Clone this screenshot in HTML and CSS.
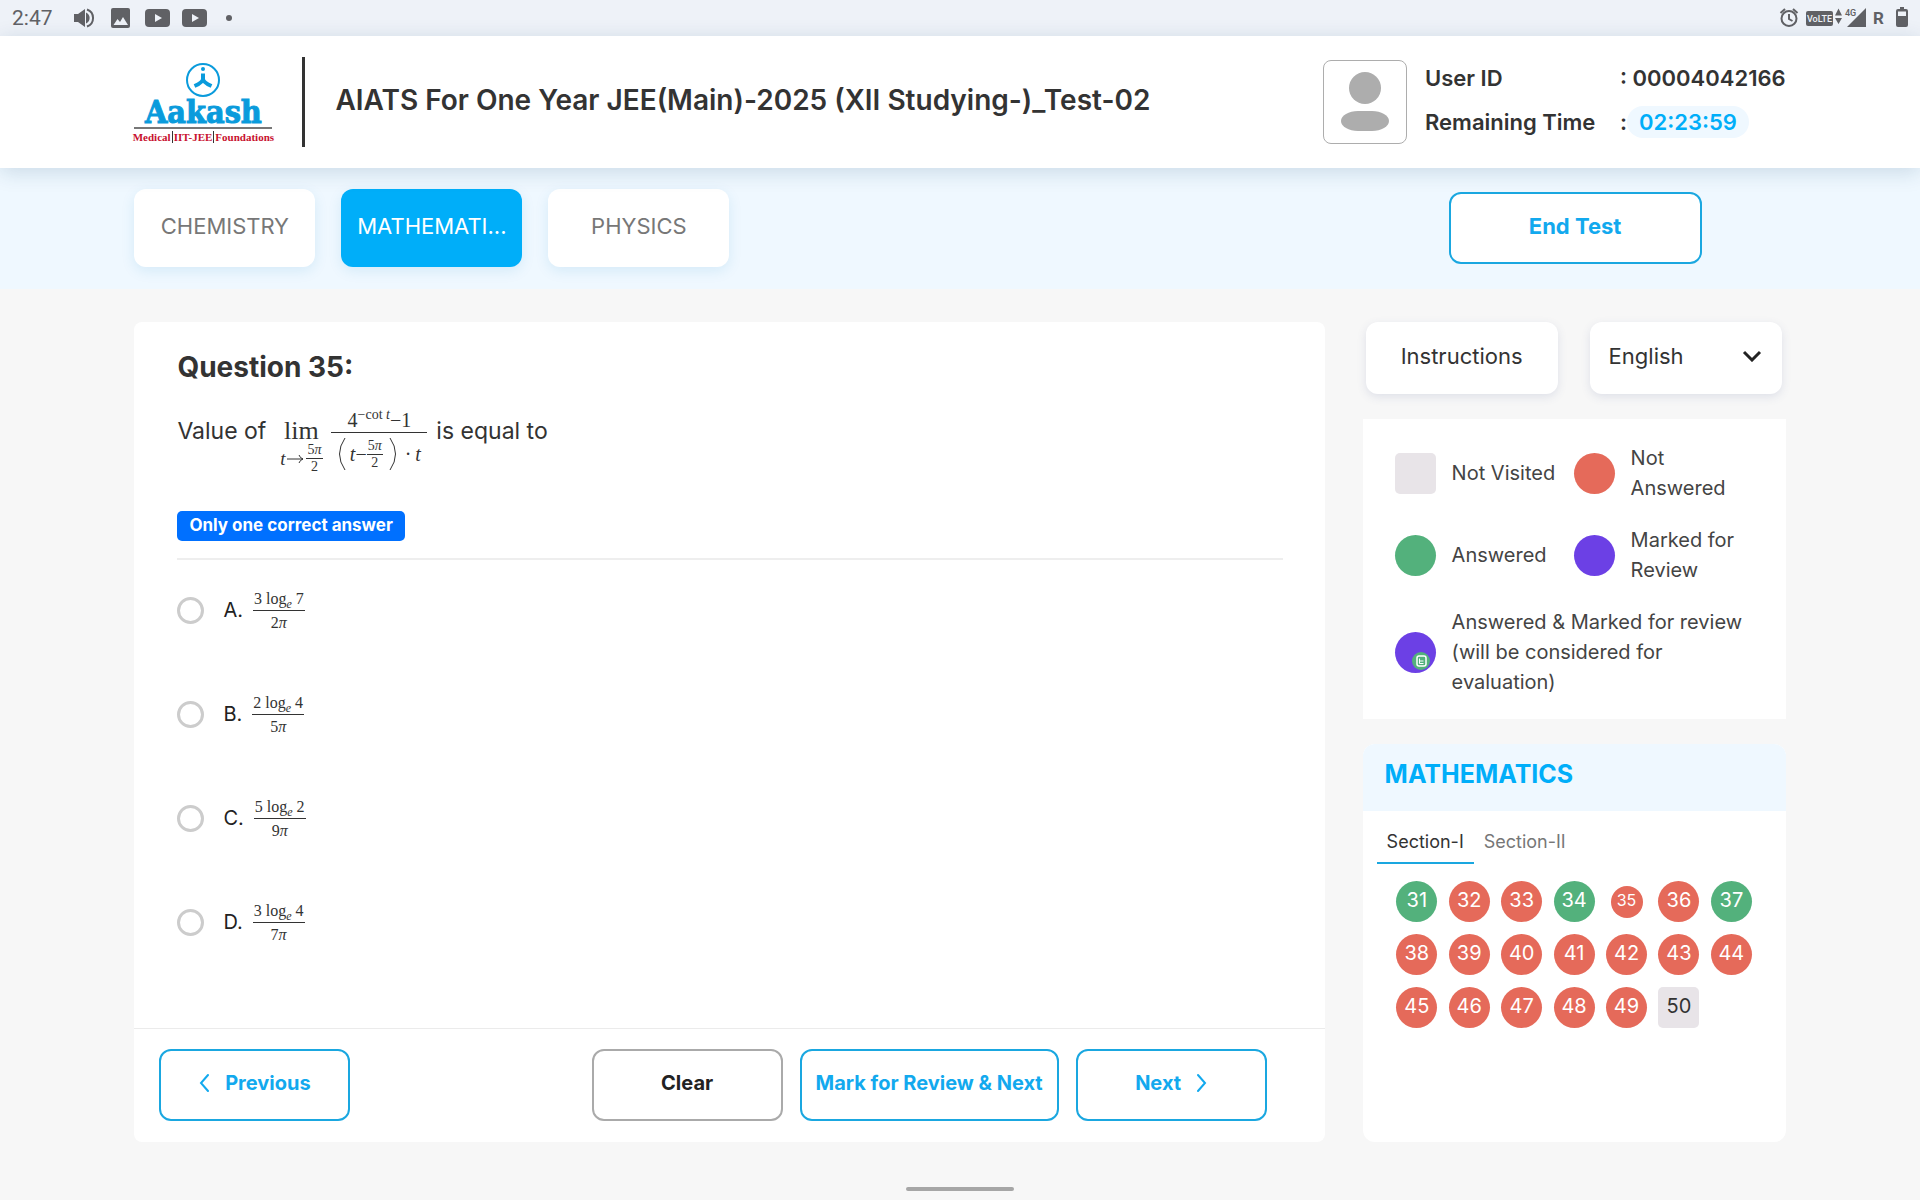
FILE: index.html
```html
<!DOCTYPE html>
<html lang="en">
<head>
<meta charset="utf-8">
<meta name="viewport" content="width=device-width, initial-scale=1">
<title>AIATS For One Year JEE(Main)-2025</title>
<link rel="stylesheet" href="styles.css">
</head>
<body>
<div class="status">
  <span class="clock">2:47</span>
  <svg class="status-left" width="160" height="24" viewBox="72 6 160 24" aria-hidden="true">
    <path d="M74 14h4l7-5v18l-7-5h-4z"/>
    <path d="M86 12.500a6 6 0 0 1 0 11z"/>
    <path class="line" d="M87 9.500a9 9 0 0 1 0 17"/>
    <rect x="111" y="8" width="19" height="20" rx="2"/>
    <path class="cut" d="M113.500 25l4-6 2.500 3 3-5 5 8z"/>
    <rect x="145" y="9" width="25" height="18" rx="4"/><path class="cut" d="M155 14l7 4-7 4z"/>
    <rect x="182" y="9" width="25" height="18" rx="4"/><path class="cut" d="M192 14l7 4-7 4z"/>
    <circle cx="229" cy="18" r="3"/>
  </svg>
  <svg class="status-right" width="130" height="24" viewBox="1779 6 130 24" aria-hidden="true">
    <circle class="line" cx="1789" cy="18.500" r="7.500"/>
    <path class="line" d="M1789 14v5l3.500 2M1780.500 13l4.500-4M1797.500 13l-4.500-4"/>
    <rect x="1806" y="11" width="27" height="15" rx="2"/>
    <text class="volte" x="1807" y="22">VoLTE</text>
    <path d="M1835 15.500l3.500-7 3.500 7zM1835 18l3.500 6 3.500-6z"/>
    <path d="M1847 27h19V8z"/>
    <text class="net" x="1845" y="16">4G</text>
    <text class="roam" x="1873" y="24">R</text>
    <path d="M1900 7h4v2h-4zM1898 9h8a2 2 0 0 1 2 2v14a2 2 0 0 1-2 2h-8a2 2 0 0 1-2-2V11a2 2 0 0 1 2-2z"/>
    <path class="cut" d="M1898 11.500h8V16h-8z"/>
  </svg>
</div>

<header class="header">
  <div class="logo">
    <svg width="34" height="34" viewBox="0 0 34 34" aria-hidden="true">
      <circle cx="17" cy="17" r="16" fill="none" stroke="#0a9bdc" stroke-width="2"/>
      <circle cx="17" cy="6" r="2" fill="#0a9bdc"/>
      <path d="M17 10.500v5.500c0 3-4 5-8.500 7M17 16c0 3 4 5 8.500 7" fill="none" stroke="#0a9bdc" stroke-width="4"/>
    </svg>
    <span class="logo-name">Aakash</span>
    <span class="logo-tag">Medical<i></i>IIT-JEE<i></i>Foundations</span>
  </div>
  <h1 class="title">AIATS For One Year JEE(Main)-2025 (XII Studying-)_Test-02</h1>
  <div class="avatar">
    <svg width="48" height="60" viewBox="0 0 48 60" aria-hidden="true">
      <circle cx="24" cy="16" r="16"/><rect x="0" y="39" width="48" height="20" rx="17" ry="10"/>
    </svg>
  </div>
  <dl class="info">
    <dt>User ID</dt><dd>: 00004042166</dd>
    <dt>Remaining Time</dt><dd>:<span class="timer">02:23:59</span></dd>
  </dl>
</header>

<nav class="subjects">
  <button class="subject" type="button">CHEMISTRY</button>
  <button class="subject active" type="button">MATHEMATI...</button>
  <button class="subject" type="button">PHYSICS</button>
  <button class="btn end" type="button">End Test</button>
</nav>

<main class="content">
  <section class="panel">
    <div class="question">
      <h2>Question 35:</h2>
      <div class="stem">
        <span>Value of</span>
        <span class="limit"><span class="lim">lim</span><span class="under"><i>t</i><svg width="17" height="10" viewBox="0 0 17 10" aria-hidden="true"><path d="M0 5h16M12 1q1 3 4 4-3 1-4 4"/></svg><span class="frac small"><span>5<i>π</i></span><span>2</span></span></span></span>
        <span class="frac main"><span>4<sup>−cot <i>t</i></sup>−1</span><span class="den"><svg width="8" height="34" viewBox="0 0 8 34" aria-hidden="true"><path d="M7 1Q-4 17 7 33"/></svg><i class="var">t</i>−<span class="frac small"><span>5<i>π</i></span><span>2</span></span><svg class="close" width="8" height="34" viewBox="0 0 8 34" aria-hidden="true"><path d="M1 1q11 16 0 32"/></svg><span class="dot">·</span><i>t</i></span></span>
        <span>is equal to</span>
      </div>
      <span class="badge">Only one correct answer</span>
      <hr>
      <div class="options">
        <label class="option"><input type="radio" name="answer">A.<span class="frac"><span>3 log<sub>e</sub> 7</span><span>2<i>π</i></span></span></label>
        <label class="option"><input type="radio" name="answer">B.<span class="frac"><span>2 log<sub>e</sub> 4</span><span>5<i>π</i></span></span></label>
        <label class="option"><input type="radio" name="answer">C.<span class="frac"><span>5 log<sub>e</sub> 2</span><span>9<i>π</i></span></span></label>
        <label class="option"><input type="radio" name="answer">D.<span class="frac"><span>3 log<sub>e</sub> 4</span><span>7<i>π</i></span></span></label>
      </div>
    </div>
    <div class="actions">
      <button class="btn previous" type="button"><svg width="10" height="20" viewBox="0 0 10 20" aria-hidden="true"><path d="M9 2L2 10l7 8"/></svg>Previous</button>
      <button class="btn clear" type="button">Clear</button>
      <button class="btn mark" type="button">Mark for Review &amp; Next</button>
      <button class="btn" type="button">Next<svg width="10" height="20" viewBox="0 0 10 20" aria-hidden="true"><path d="M1 2l7 8-7 8"/></svg></button>
    </div>
  </section>

  <aside class="side">
    <div class="tools">
      <button class="tool" type="button">Instructions</button>
      <div class="tool language">
        <select aria-label="Language"><option>English</option></select>
        <svg width="20" height="12" viewBox="0 0 20 12" aria-hidden="true"><path d="M2 2l8 8 8-8"/></svg>
      </div>
    </div>
    <ul class="legend">
      <li><span class="swatch blank"></span>Not Visited</li>
      <li><span class="swatch red"></span>Not Answered</li>
      <li><span class="swatch green"></span>Answered</li>
      <li><span class="swatch violet"></span>Marked for Review</li>
      <li class="wide"><span class="swatch violet"><svg class="note" width="18" height="18" viewBox="0 0 18 18" aria-hidden="true"><circle cx="9" cy="9" r="9" fill="#53b17c"/><rect x="5" y="4" width="9" height="10" rx="2" fill="none" stroke="#fff" stroke-width="1.500"/><path d="M7.500 6.500v5h4M7.500 9h4" fill="none" stroke="#fff"/></svg></span>Answered &amp; Marked for review (will be considered for evaluation)</li>
    </ul>
    <section class="palette">
      <h2>MATHEMATICS</h2>
      <div class="sections">
        <button class="section active" type="button">Section-I</button>
        <button class="section" type="button">Section-II</button>
      </div>
      <div class="numbers">
        <button class="num green" type="button">31</button>
        <button class="num red" type="button">32</button>
        <button class="num red" type="button">33</button>
        <button class="num green" type="button">34</button>
        <button class="num red current" type="button">35</button>
        <button class="num red" type="button">36</button>
        <button class="num green" type="button">37</button>
        <button class="num red" type="button">38</button>
        <button class="num red" type="button">39</button>
        <button class="num red" type="button">40</button>
        <button class="num red" type="button">41</button>
        <button class="num red" type="button">42</button>
        <button class="num red" type="button">43</button>
        <button class="num red" type="button">44</button>
        <button class="num red" type="button">45</button>
        <button class="num red" type="button">46</button>
        <button class="num red" type="button">47</button>
        <button class="num red" type="button">48</button>
        <button class="num red" type="button">49</button>
        <button class="num blank" type="button">50</button>
      </div>
    </section>
  </aside>
</main>
<div class="home"><span></span></div>
</body>
</html>
```
FILE: styles.css
```css
* { box-sizing: border-box; }
body {
  margin: 0;
  min-height: 100vh;
  display: flex;
  flex-direction: column;
  background: #f7f7f7;
  color: #333;
  font-family: Inter, "Open Sans", sans-serif;
  font-size: 22px;
}
button, select { font: inherit; color: inherit; margin: 0; cursor: pointer; }
h1, h2, ul, dl, dd { margin: 0; padding: 0; }

/* device status bar */
.status {
  display: flex;
  align-items: center;
  height: 36px;
  padding: 0 11px 0 12px;
  background: #eef2f8;
  color: #606165;
  font: 400 21px/36px Roboto, sans-serif;
}
.clock { width: 60px; }
.status svg { fill: #606165; }
.status .cut { fill: #eef2f8; }
.status .line { fill: none; stroke: #606165; stroke-width: 2; }
.status-right { margin-left: auto; }
.status .volte { font: 500 9px Roboto, sans-serif; fill: #eef2f8; }
.net { font: 500 9px Roboto, sans-serif; }
.roam { font: 700 17px Roboto, sans-serif; }

/* header */
.header {
  display: flex;
  align-items: center;
  height: 132px;
  padding: 0 7%;
  background: #fff;
  box-shadow: 0 4px 20px rgba(0, 60, 100, .16);
  position: relative;
}
.logo { width: 138px; padding-top: 4px; display: flex; flex-direction: column; align-items: center; }
.logo-name {
  color: #0a9bdc;
  font: 700 32px/30px "DejaVu Serif Condensed", "DejaVu Serif", serif;
  -webkit-text-stroke: 1px #0a9bdc;
}
.logo-tag {
  display: flex;
  justify-content: center;
  width: 138px;
  border-top: 2px solid #777;
  color: #c8102e;
  font: 700 11px/16px "Liberation Serif", serif;
  white-space: nowrap;
}
.logo-tag i { flex: none; width: 1px; height: 12px; margin: 2px 1px; background: #333; }
.title {
  flex: 1;
  margin-left: 30px;
  padding-left: 30px;
  border-left: 3px solid #333;
  font-size: 28px;
  font-weight: 600;
  line-height: 86px;
  padding-bottom: 4px;
  white-space: nowrap;
}
.avatar {
  display: grid;
  place-items: center;
  width: 84px;
  height: 84px;
  margin-right: 18px;
  border: 1px solid #adadad;
  border-radius: 8px;
}
.avatar svg { fill: #adadad; }
.info {
  display: grid;
  grid-template-columns: 195px auto;
  row-gap: 12px;
  padding-bottom: 4px;
  font-weight: 600;
  line-height: 32px;
  white-space: nowrap;
}
.info dd { display: flex; white-space: pre; }
.timer { padding: 0 12px; border-radius: 16px; background: #eff8ff; color: #00aef9; }

/* subject strip */
.subjects {
  display: flex;
  align-items: center;
  gap: 26px;
  height: 121px;
  padding: 0 7% 2px;
  background: #eff8ff;
}
.subject {
  width: 181px;
  height: 78px;
  padding: 0 0 4px;
  border: 0;
  border-radius: 12px;
  background: #fff;
  box-shadow: 0 4px 14px rgba(0, 130, 190, .11);
  color: #777;
}
.subject.active { background: #00aef9; color: #fff; }
.btn {
  display: flex;
  align-items: center;
  justify-content: center;
  gap: 16px;
  width: 191px;
  height: 72px;
  padding: 0 0 4px;
  border: 2px solid #1aa7e0;
  border-radius: 12px;
  background: #fff;
  color: #12a9ee;
  font-size: 20px;
  font-weight: 700;
  white-space: nowrap;
}
.btn svg { fill: none; stroke: currentColor; stroke-width: 2; stroke-linecap: round; }
.end { width: 253px; margin: 0 84px 0 auto; font-size: 22px; }

/* main area */
.content {
  flex: 1;
  display: grid;
  grid-template-columns: minmax(0, 1fr) 423px;
  gap: 38px;
  padding: 33px 7% 0;
}
.panel { display: flex; flex-direction: column; background: #fff; border-radius: 8px; }
.question { flex: 1; padding: 26px 42px 0 43px; }
.question h2 { font-size: 28px; line-height: 38px; }
.stem { display: flex; height: 103px; margin-top: 22px; font-size: 23px; line-height: 46px; }
.frac {
  display: inline-flex;
  flex-direction: column;
  align-items: center;
  margin-left: 10px;
  font: 16px/23px "Liberation Serif", serif;
  color: #333;
}
.frac > span:first-child { align-self: stretch; border-bottom: 1px solid #333; text-align: center; padding: 0 1px; }
.frac sub { font-size: 12px; font-style: italic; line-height: 0; }
.frac.small { margin: 0; font-size: 14px; line-height: 16px; }
.limit { width: 50px; margin-left: 10px; display: flex; flex-direction: column; align-items: center; font: 26px/46px "Liberation Serif", serif; }
.under { display: flex; align-items: center; gap: 2px; font-size: 19px; line-height: 30px; margin-top: -12px; }
.stem svg { flex: none; fill: none; stroke: #333; stroke-width: 1; }
.frac.main { width: 96px; margin: 0 9px 0 5px; font-size: 20px; line-height: 24px; align-self: flex-start; }
.main sup { font-size: 14px; line-height: 0; }
.den { display: flex; align-items: center; height: 42px; }
.var { margin-left: 4px; }
.close { margin-left: 6px; }
.dot { padding: 0 4px 0 8px; }
.badge {
  display: inline-block;
  height: 30px;
  padding: 0 12px;
  border-radius: 5px;
  background: #0070ff;
  color: #fff;
  font-size: 17px;
  font-weight: 700;
  line-height: 28px;
  vertical-align: top;
}
.question hr { margin: 17px 0 0; border: 0; border-top: 2px solid #eee; }
.options { padding-top: 22px; }
.option { display: flex; align-items: center; height: 56px; margin-bottom: 48px; font-size: 20px; color: #222; }
.option input {
  appearance: none;
  width: 27px;
  height: 27px;
  margin: 0 19px 0 0;
  border: 3px solid #ccc;
  border-radius: 50%;
}
.actions { display: flex; gap: 17px; padding: 20px 58px 21px 25px; border-top: 1px solid #ebebeb; }
.previous { margin-right: auto; }
.clear { border-color: #aaa; color: #222; }
.mark { width: 259px; }

/* side column */
.side { display: flex; flex-direction: column; }
.tools { display: flex; justify-content: space-between; padding: 0 4px 0 3px; }
.tool {
  width: 192px;
  height: 72px;
  padding: 0 0 4px;
  border: 0;
  border-radius: 12px;
  background: #fff;
  box-shadow: 0 3px 10px rgba(60, 80, 140, .13);
  color: #333;
}
.language { display: grid; align-items: center; }
.language select, .language svg { grid-area: 1 / 1; }
.language select { appearance: none; width: 100%; height: 68px; padding: 0 19px; border: 0; background: none; }
.language svg { justify-self: end; margin-right: 20px; fill: none; stroke: #222; stroke-width: 3; pointer-events: none; }
.legend {
  display: grid;
  grid-template-columns: 179px minmax(0, 1fr);
  row-gap: 22px;
  margin-top: 25px;
  padding: 24px 32px 22px;
  background: #fff;
  list-style: none;
  color: #444;
  font-size: 20px;
  line-height: 30px;
}
.legend li { display: flex; align-items: center; gap: 16px; }
.wide { grid-column: 1 / -1; }
.swatch { flex: none; position: relative; width: 41px; height: 41px; border-radius: 50%; }
.note { position: absolute; right: 6px; bottom: 3px; }
.red { background: #e56a5a; color: #fff; }
.green { background: #53b17c; color: #fff; }
.violet { background: #6c40e5; }
.swatch.blank, .num.blank { background: #e8e4e8; color: #333; border-radius: 5px; }
.palette { flex: 1; margin-top: 25px; border-radius: 12px; background: #fff; overflow: hidden; }
.palette h2 { padding: 0 22px 6px; background: #eff8ff; color: #00aef9; font-size: 25px; line-height: 61px; }
.sections { display: flex; padding: 9px 14px 0; }
.section {
  height: 44px;
  padding: 0 10px;
  border: 0;
  border-bottom: 2px solid transparent;
  background: none;
  color: #777;
  font-size: 18px;
}
.section.active { border-color: #1aa7e0; color: #333; }
.numbers {
  display: grid;
  grid-template-columns: repeat(7, 1fr);
  grid-auto-rows: 41px;
  row-gap: 12px;
  place-items: center;
  padding: 17px 28px;
}
.num { width: 41px; height: 41px; padding: 0 0 4px; border: 0; border-radius: 50%; font-size: 20px; }
.num.current { width: 32px; height: 32px; font-size: 16px; }

/* gesture bar */
.home { display: flex; justify-content: center; align-items: flex-end; height: 58px; padding-bottom: 9px; }
.home span { width: 108px; height: 4px; border-radius: 2px; background: #a6a6a6; }
```
